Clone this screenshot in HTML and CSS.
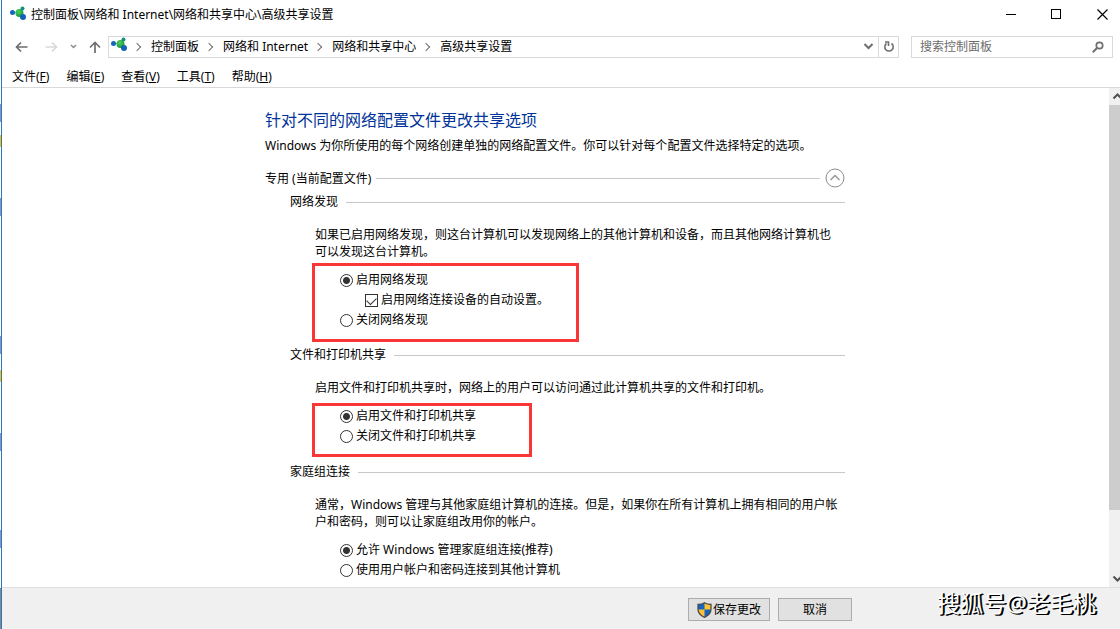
FILE: index.html
```html
<!DOCTYPE html>
<html lang="zh-CN">
  <head>
    <meta charset="UTF-8" />
    <meta name="viewport" content="width=device-width, initial-scale=1.0" />
    <title>高级共享设置</title>
    <link rel="stylesheet" href="styles.css">
  </head>
  <body>
    <svg class="defs" width="0" height="0" aria-hidden="true">
      <defs>
        <radialGradient id="green" cx="40%" cy="35%" r="65%">
          <stop offset="0" stop-color="#4fd35a" />
          <stop offset="1" stop-color="#17963a" />
        </radialGradient>
        <symbol id="network" viewBox="0 0 16 16">
          <path d="M3 6 L10 7 M10 7 L13 2 M10 7 L13 12" stroke="#9cc7dc" stroke-width="1" />
          <circle cx="9.5" cy="7" r="4" fill="url(#green)" />
          <circle cx="2.5" cy="6.500" r="2.500" fill="#1268b8" />
          <circle cx="12.500" cy="2.500" r="2" fill="#178f7c" />
          <circle cx="13" cy="11" r="3" fill="#1263b5" />
        </symbol>
      </defs>
    </svg>

    <div class="window">
      <header class="titlebar">
        <svg class="app-icon" width="16" height="16"><use href="#network" /></svg>
        <span class="title">控制面板\网络和 Internet\网络和共享中心\高级共享设置</span>
        <div class="window-buttons">
          <button type="button" aria-label="最小化">
            <svg width="11" height="11" viewBox="0 0 11 11"><path d="M0 5.500h10" stroke="#000" /></svg>
          </button>
          <button type="button" aria-label="最大化">
            <svg width="11" height="11" viewBox="0 0 11 11"><rect x="0.500" y="0.500" width="9" height="9" fill="none" stroke="#000" /></svg>
          </button>
          <button type="button" aria-label="关闭">
            <svg width="11" height="11" viewBox="0 0 11 11"><path d="M0.500 0.500l10 10M10.500 0.500l-10 10" stroke="#000" stroke-width="1.200" /></svg>
          </button>
        </div>
      </header>

      <div class="navbar">
        <div class="nav-buttons">
          <button type="button" aria-label="后退">
            <svg width="13" height="12" viewBox="0 0 13 12"><path d="M12.500 6H1.500M6 1.500L1.500 6L6 10.500" fill="none" stroke="#6e6e6e" stroke-width="1.700" /></svg>
          </button>
          <button type="button" aria-label="前进" disabled>
            <svg width="13" height="12" viewBox="0 0 13 12"><path d="M0.500 6H11.500M7 1.500L11.500 6L7 10.500" fill="none" stroke="#d9d9d9" stroke-width="1.700" /></svg>
          </button>
          <button type="button" class="recent" aria-label="最近的位置">
            <svg width="7" height="5" viewBox="0 0 7 5"><path d="M1 1L3.500 3.500L6 1" fill="none" stroke="#8a8a8a" stroke-width="1.500" /></svg>
          </button>
          <button type="button" aria-label="向上">
            <svg width="12" height="12" viewBox="0 0 12 12"><path d="M6 12V1.500M1 6.500L6 1.500L11 6.500" fill="none" stroke="#6e6e6e" stroke-width="1.700" /></svg>
          </button>
        </div>
        <div class="address">
          <svg class="address-icon" width="16" height="16"><use href="#network" /></svg>
          <nav class="crumbs">
            <a href="#">控制面板</a>
            <a href="#">网络和 Internet</a>
            <a href="#">网络和共享中心</a>
            <a href="#">高级共享设置</a>
          </nav>
          <button type="button" class="dropdown" aria-label="展开">
            <svg width="9" height="7" viewBox="0 0 9 7"><path d="M0.500 1L4.500 5L8.500 1" fill="none" stroke="#707070" stroke-width="2" /></svg>
          </button>
          <button type="button" class="refresh" aria-label="刷新">
            <svg width="12" height="12" viewBox="0 0 12 12"><path d="M8.500 2.500A4.200 4.200 0 1 1 3.500 2.500M2 1H5.500V5" fill="none" stroke="#707070" stroke-width="1.600" /></svg>
          </button>
        </div>
        <div class="search">
          <input type="text" placeholder="搜索控制面板" aria-label="搜索控制面板">
          <svg width="12" height="12" viewBox="0 0 12 12"><circle cx="7.500" cy="4.500" r="3.200" fill="none" stroke="#707070" stroke-width="1.700" /><path d="M5 7L0.800 11.200" stroke="#707070" stroke-width="2" /></svg>
        </div>
      </div>

      <div class="menubar">
        <button type="button">文件(<u>F</u>)</button>
        <button type="button">编辑(<u>E</u>)</button>
        <button type="button">查看(<u>V</u>)</button>
        <button type="button">工具(<u>T</u>)</button>
        <button type="button">帮助(<u>H</u>)</button>
      </div>

      <div class="body">
        <main class="content">
          <form class="settings" id="settings">
            <h1>针对不同的网络配置文件更改共享选项</h1>
            <p class="intro">Windows 为你所使用的每个网络创建单独的网络配置文件。你可以针对每个配置文件选择特定的选项。</p>

            <div class="profile-head">
              <h2>专用 (当前配置文件)</h2>
              <button type="button" class="collapse" aria-label="折叠">
                <svg width="20" height="20" viewBox="0 0 20 20"><circle cx="10" cy="10" r="9" fill="none" stroke="#8c8c8c" /><path d="M5.500 12L10 7.500L14.500 12" fill="none" stroke="#9a9a9a" stroke-width="1.500" /></svg>
              </button>
            </div>

            <section>
              <h3>网络发现</h3>
              <p>如果已启用网络发现，则这台计算机可以发现网络上的其他计算机和设备，而且其他网络计算机也可以发现这台计算机。</p>
              <div class="options marked discovery">
                <label><input type="radio" name="discovery" checked>启用网络发现</label>
                <label class="nested"><input type="checkbox" checked>启用网络连接设备的自动设置。</label>
                <label><input type="radio" name="discovery">关闭网络发现</label>
              </div>
            </section>

            <section>
              <h3>文件和打印机共享</h3>
              <p>启用文件和打印机共享时，网络上的用户可以访问通过此计算机共享的文件和打印机。</p>
              <div class="options marked sharing">
                <label><input type="radio" name="sharing" checked>启用文件和打印机共享</label>
                <label><input type="radio" name="sharing">关闭文件和打印机共享</label>
              </div>
            </section>

            <section>
              <h3>家庭组连接</h3>
              <p>通常，Windows 管理与其他家庭组计算机的连接。但是，如果你在所有计算机上拥有相同的用户帐户和密码，则可以让家庭组改用你的帐户。</p>
              <div class="options">
                <label><input type="radio" name="homegroup" checked>允许 Windows 管理家庭组连接(推荐)</label>
                <label><input type="radio" name="homegroup">使用用户帐户和密码连接到其他计算机</label>
              </div>
            </section>
          </form>
        </main>
        <div class="scrollbar">
          <svg width="17" height="17" viewBox="0 0 17 17"><path d="M4.500 10.500L8.500 6.500L12.500 10.500" fill="none" stroke="#505050" stroke-width="2" /></svg>
          <div class="track"><div class="thumb"></div></div>
          <svg width="17" height="17" viewBox="0 0 17 17"><path d="M4.500 6.500L8.500 10.500L12.500 6.500" fill="none" stroke="#505050" stroke-width="2" /></svg>
        </div>
      </div>

      <footer class="footer">
        <div class="actions">
          <button type="submit" form="settings" class="save">
            <svg width="15" height="16" viewBox="0 0 15 16">
              <path d="M7.500 0.500C5.500 2 3.500 2.300 1 2.300V7C1 11 3.500 13.800 7.500 15.500C11.500 13.800 14 11 14 7V2.300C11.500 2.300 9.500 2 7.500 0.500Z" fill="#1565c0" />
              <path d="M7.500 0.500C9.500 2 11.500 2.300 14 2.300V7.500H7.500ZM1 7.500H7.500V15.500C3.500 13.800 1.200 11 1 7.500Z" fill="#ffc233" />
              <path d="M7.500 0.800C5.500 2.200 3.500 2.500 1 2.500V7C1 11 3.500 13.600 7.500 15.300C11.500 13.600 14 11 14 7V2.500C11.500 2.500 9.500 2.200 7.500 0.800Z" fill="none" stroke="#4c4c4c" stroke-width="1.300" />
            </svg>
            保存更改
          </button>
          <button type="button">取消</button>
        </div>
      </footer>
      <div class="watermark">搜狐号@老毛桃</div>
    </div>
  </body>
</html>
```
FILE: styles.css
```css
* {
  box-sizing: border-box;
}
body {
  margin: 0;
  padding-left: 1px;
  /* 窗口左侧露出的桌面 */
  background: linear-gradient(
    #fff 104px, #9093b8 104px 122px, #fff 122px 135px, #ffc000 135px 147px,
    #fff 147px 198px, #9093b8 198px 216px, #fff 216px 336px, #9093b8 336px 354px,
    #fff 354px 370px, #ffc000 370px 382px, #fff 382px 433px, #9093b8 433px 451px,
    #fff 451px 530px, #9093b8 530px 548px, #fff 548px 588px, #8c8585 588px
  );
  font-family: "Noto Sans", "Noto Sans CJK SC", sans-serif;
  font-size: 12px;
  line-height: 17px;
  color: #000;
}
button,
input {
  font: inherit;
  color: inherit;
}
button {
  padding: 0;
  border: 0;
  background: none;
}
svg {
  display: block;
  flex: none;
}
h1,
h2,
h3,
p {
  margin: 0;
  font-weight: normal;
}
.defs {
  position: absolute;
}
.window {
  position: relative;
  display: flex;
  flex-direction: column;
  height: 100vh;
  border-left: 1px solid #2779c4;
  background: #fff;
  overflow: hidden;
}

/* 标题栏 */
.titlebar {
  display: flex;
  align-items: center;
  height: 28px;
  padding-left: 8px;
}
.title {
  flex: 1;
  margin-left: 5px;
}
.window-buttons {
  display: flex;
}
.window-buttons button {
  display: flex;
  justify-content: center;
  align-items: center;
  width: 45px;
  height: 28px;
}
.window-buttons button:last-child {
  width: 41px;
  padding-left: 5px;
}

/* 地址栏 */
.navbar {
  display: flex;
  align-items: center;
  height: 37px;
  padding: 0 7px 0 13px;
}
.nav-buttons {
  display: flex;
  align-items: center;
  width: 93px;
  gap: 17px;
}
.nav-buttons .recent {
  margin: 0 -5px;
}
.address {
  flex: 1;
  display: flex;
  align-items: center;
  height: 22px;
  border: 1px solid #d9d9d9;
}
.address-icon {
  margin: -4px 0 0 2px;
}
.crumbs {
  flex: 1;
  display: flex;
}
.crumbs a {
  display: flex;
  align-items: center;
  color: #000;
  text-decoration: none;
}
.crumbs a::before {
  content: "";
  width: 5px;
  height: 5px;
  margin: 0 11px 0 7px;
  border: solid #707070;
  border-width: 1px 1px 0 0;
  transform: rotate(45deg);
}
.dropdown,
.refresh {
  display: flex;
  justify-content: center;
  align-items: center;
  width: 20px;
  height: 20px;
}
.refresh {
  border-left: 1px solid #d9d9d9;
}
.search {
  display: flex;
  align-items: center;
  width: 202px;
  height: 22px;
  margin-left: 12px;
  padding: 0 8px;
  border: 1px solid #d9d9d9;
}
.search input {
  flex: 1;
  min-width: 0;
  padding: 0;
  border: 0;
  outline: 0;
  background: none;
}
.search input::placeholder {
  color: #6d6d6d;
}

/* 菜单 */
.menubar {
  display: flex;
  align-items: center;
  gap: 17px;
  height: 23px;
  padding-left: 10px;
  border-bottom: 1px solid #d9d9d9;
}

/* 设置内容 */
.body {
  flex: 1;
  display: flex;
  min-height: 0;
}
.content {
  flex: 1;
  padding-right: 1px;
  overflow: hidden;
}
.settings {
  max-width: 580px;
  margin: 0 auto;
  padding-top: 20px;
}
.settings h1 {
  font-size: 16px;
  line-height: 24px;
  color: #003399;
}
.intro {
  margin-top: 5px;
}
.profile-head,
.settings h3 {
  display: flex;
  align-items: center;
}
.profile-head {
  height: 20px;
  margin: 14px 0 1px;
}
.profile-head h2 {
  flex: 1;
  display: flex;
  align-items: center;
  gap: 5px;
  margin-right: 5px;
  font-size: 12px;
}
.profile-head h2::after,
.settings h3::after {
  content: "";
  flex: 1;
  height: 1px;
  background: #c8c8c8;
}
section {
  padding: 4px 0 0 25px;
}
.settings h3 {
  gap: 8px;
  font-size: 12px;
  line-height: 18px;
}
section p {
  margin: 15px 0 0 25px;
  padding-right: 5px;
}
.options {
  margin: 10px 0 0 22px;
  padding-left: 28px;
}
.options label {
  display: flex;
  gap: 3px;
  line-height: 20px;
}
.options .nested {
  padding-left: 25px;
}
.options input {
  appearance: none;
  flex: none;
  width: 13px;
  height: 13px;
  margin: 4px 0 0;
  border: 1px solid #333;
  background: #fff;
}
.options input[type="radio"] {
  border-radius: 50%;
}
.options input[type="radio"]:checked {
  background: radial-gradient(circle, #333 3px, #fff 4px);
}
.options input[type="checkbox"]:checked::before {
  content: "";
  display: block;
  width: 9px;
  height: 5px;
  margin: 2px 1px;
  border: solid #333;
  border-width: 0 0 1px 1px;
  transform: rotate(-45deg);
}
.options input[type="checkbox"] {
  display: flex;
  align-items: flex-start;
}
/* 红框标注 */
.marked {
  padding-left: 25px;
  border: 3px solid #fa3737;
}
.discovery {
  width: 267px;
  margin-top: 3px;
  padding-top: 4px;
  padding-bottom: 9px;
}
.sharing {
  width: 220px;
  margin-top: 7px;
  margin-bottom: 2px;
  padding-bottom: 8px;
}

/* 滚动条 */
.scrollbar {
  display: flex;
  flex-direction: column;
  width: 11px;
  background: #f0f0f0;
  overflow: hidden;
}
.track {
  flex: 1;
}
.thumb {
  height: 87%;
  background: #cdcdcd;
}

/* 底部按钮 */
.footer {
  height: 42px;
  border-top: 1px solid #dfdfdf;
  background: #f0f0f0;
}
.actions {
  display: flex;
  justify-content: flex-end;
  gap: 8px;
  max-width: 582px;
  margin: 0 auto;
  padding-top: 10px;
}
.actions button {
  display: flex;
  justify-content: center;
  align-items: center;
  width: 74px;
  height: 23px;
  border: 1px solid #adadad;
  background: #e1e1e1;
}
.actions .save {
  gap: 1px;
  width: 82px;
}
.watermark {
  position: absolute;
  right: 24px;
  bottom: 10px;
  font-size: 23px;
  line-height: 32px;
  color: #fff;
  text-shadow: 1px 1px 0 #000, 2px 1px 0 #000;
}
```
